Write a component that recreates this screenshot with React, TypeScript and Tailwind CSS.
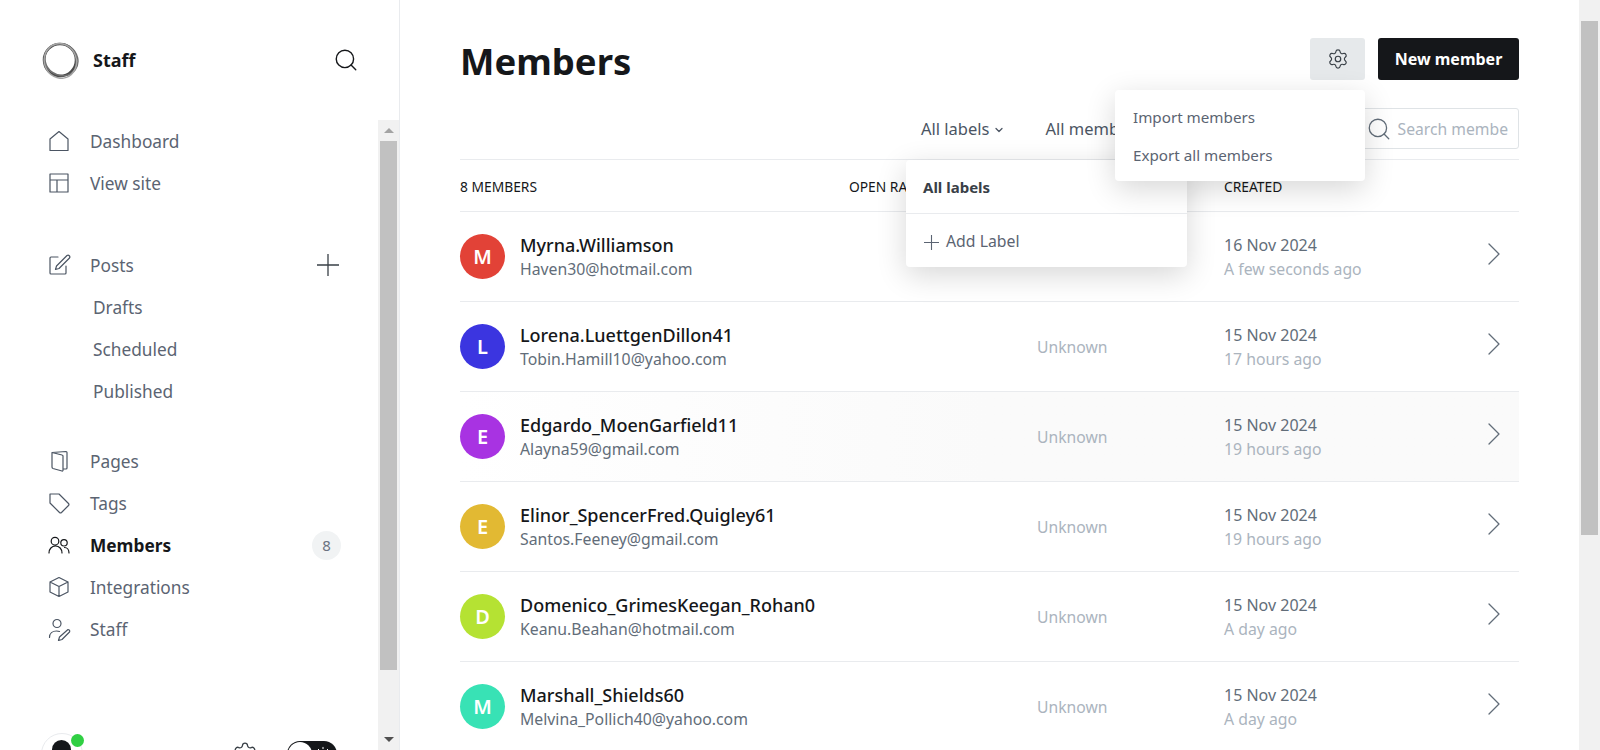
import { ChevronDown, Search, Settings, Sun } from "lucide-react";

const font = "font-['Noto_Sans',sans-serif]";

const members = [
  { initial: "M", color: "bg-[#e24237]", name: "Myrna.Williamson", email: "Haven30@hotmail.com", date: "16 Nov 2024", ago: "A few seconds ago" },
  { initial: "L", color: "bg-[#3b35e0]", name: "Lorena.LuettgenDillon41", email: "Tobin.Hamill10@yahoo.com", date: "15 Nov 2024", ago: "17 hours ago" },
  { initial: "E", color: "bg-[#a833e2]", name: "Edgardo_MoenGarfield11", email: "Alayna59@gmail.com", date: "15 Nov 2024", ago: "19 hours ago", hover: true },
  { initial: "E", color: "bg-[#e2b933]", name: "Elinor_SpencerFred.Quigley61", email: "Santos.Feeney@gmail.com", date: "15 Nov 2024", ago: "19 hours ago" },
  { initial: "D", color: "bg-[#b5e233]", name: "Domenico_GrimesKeegan_Rohan0", email: "Keanu.Beahan@hotmail.com", date: "15 Nov 2024", ago: "A day ago" },
  { initial: "M", color: "bg-[#38e2b5]", name: "Marshall_Shields60", email: "Melvina_Pollich40@yahoo.com", date: "15 Nov 2024", ago: "A day ago" },
];

function NavIcon({ d }: { d: string }) {
  return (
    <svg viewBox="0 0 24 24" className="h-[24px] w-[24px] shrink-0" fill="none" stroke="currentColor" strokeWidth="1.200" strokeLinecap="round" strokeLinejoin="round">
      <path d={d} />
    </svg>
  );
}

const icons = {
  home: "M3 21.500V10L12 2.500 21 10v11.500z",
  layout: "M3 3h18v18H3zM3 9h18M10 9v12",
  pen: "M11 4H4a1 1 0 0 0-1 1v15a1 1 0 0 0 1 1h14a1 1 0 0 0 1-1v-7M20 2.500a1.800 1.800 0 0 1 2.500 2.500L12 15.500l-3.500 1 1-3.500z",
  page: "M5 3.500 19 2.500a1 1 0 0 1 1 1V19a1 1 0 0 1-1 1h-3M5 3.500l10 2.500a1 1 0 0 1 1 1v14.500a.7.7 0 0 1-1 .5l-9-2.500a1.500 1.500 0 0 1-1-1.500z",
  tag: "M3 3h9l9.500 9.500a1.500 1.500 0 0 1 0 2l-7 7a1.500 1.500 0 0 1-2 0L3 12z",
  members: "M8 12a3.800 3.800 0 1 0 0-7.600A3.800 3.800 0 0 0 8 12zM2 20c0-4 2.700-7 6.500-7s6.500 3 6.500 7M17 13a3.200 3.200 0 1 0 0-6.400 3.200 3.200 0 0 0 0 6.400zM17.500 14.500c2.800 0 4.500 2.500 4.500 5.500",
  box: "M12 2.500 21 7v10l-9 4.500L3 17V7zM3 7l9 4.500L21 7M12 11.500v10",
  staff: "M10 10.500a4 4 0 1 0 0-8 4 4 0 0 0 0 8zM2.500 20.500c0-4 3-6.500 7-6.500 1 0 2 .1 3 .5M21 12.500a1.700 1.700 0 0 1 1.500 2.500L15 22.500l-3.500 1 1-3.500z",
};

function NavRow({ icon, label, active, right }: { icon?: string; label: string; active?: boolean; right?: React.ReactNode }) {
  return (
    <div className={`flex h-[42px] shrink-0 items-center ${active ? "text-[#15171a]" : "text-[#4b5563]"}`}>
      {icon ? (
        <span className="mr-[19px] flex w-[24px] justify-center">
          <NavIcon d={icon} />
        </span>
      ) : (
        <span className="w-[46px]" />
      )}
      <span className={`pt-[2px] text-[17.300px] ${active ? "font-bold text-[#15171a]" : "text-[#5b6472]"}`}>{label}</span>
      {right && <span className="ml-auto flex">{right}</span>}
    </div>
  );
}

function ScrollArrow({ up }: { up?: boolean }) {
  return (
    <div className="flex h-[21px] items-center justify-center">
      <div className={`h-0 w-0 border-x-[5px] border-x-transparent ${up ? "border-b-[5px] border-b-[#a3a3a3]" : "border-t-[5px] border-t-[#505050]"}`} />
    </div>
  );
}

function Sidebar() {
  return (
    <aside className="flex h-full w-[400px] shrink-0 overflow-hidden border-r border-[#e9ebee]">
      <div className="flex min-w-0 flex-1 flex-col overflow-hidden pl-[41px] pr-[19px]">
        <div className="flex h-[120px] shrink-0 items-center">
          <svg viewBox="0 0 38 38" className="h-[38px] w-[38px]" fill="none">
            <circle cx="19" cy="19" r="16" stroke="#4a4a4a" strokeWidth="2.500" />
            <ellipse cx="20" cy="18" rx="17" ry="15.500" stroke="#6f6f6f" strokeWidth="1.500" transform="rotate(35 19 19)" />
            <ellipse cx="19" cy="20" rx="16" ry="17.500" stroke="#a5a5a5" strokeWidth="1.500" transform="rotate(-20 19 19)" />
          </svg>
          <span className="ml-[14px] text-[18px] font-bold text-[#15171a]">Staff</span>
          <Search className="ml-auto h-[26px] w-[26px] text-[#15171a]" strokeWidth={1.300} />
        </div>
        <nav className="flex shrink-0 flex-col pl-[6px] pr-[18px]">
          <NavRow icon={icons.home} label="Dashboard" />
          <NavRow icon={icons.layout} label="View site" />
          <div className="h-[40px]" />
          <NavRow
            icon={icons.pen}
            label="Posts"
            right={
              <svg viewBox="0 0 22 22" className="mr-[2px] h-[22px] w-[22px] text-[#394047]" fill="none" stroke="currentColor" strokeWidth="1.300">
                <path d="M11 0v22M0 11h22" />
              </svg>
            }
          />
          <NavRow label="Drafts" />
          <NavRow label="Scheduled" />
          <NavRow label="Published" />
          <div className="h-[28px]" />
          <NavRow icon={icons.page} label="Pages" />
          <NavRow icon={icons.tag} label="Tags" />
          <NavRow
            icon={icons.members}
            label="Members"
            active
            right={<span className="flex h-[29px] w-[29px] items-center justify-center rounded-full bg-[#f1f3f4] text-[15px] text-[#6b7280]">8</span>}
          />
          <NavRow icon={icons.box} label="Integrations" />
          <NavRow icon={icons.staff} label="Staff" />
        </nav>
        <div className="mt-[83px] flex shrink-0 items-start">
          <div className="relative h-[42px] w-[42px] shrink-0 rounded-full border border-[#e9ebee] bg-white">
            <div className="absolute left-[10px] top-[6px] h-[24px] w-[19px] rounded-full bg-[#15171a]" />
            <div className="absolute left-[29px] top-[0px] h-[13px] w-[13px] rounded-full bg-[#30cf43]" />
          </div>
          <Settings className="ml-[149px] mt-[8px] h-[26px] w-[26px] shrink-0 text-[#394047]" strokeWidth={1.200} />
          <div className="ml-[29px] mt-[8px] flex h-[26px] w-[50px] shrink-0 items-center rounded-full bg-[#15171a]">
            <div className="ml-[1px] h-[24px] w-[24px] rounded-full bg-white" />
            <Sun className="ml-[3px] h-[16px] w-[16px] text-white" strokeWidth={1.500} />
          </div>
        </div>
      </div>
      <div className="flex h-full w-[21px] shrink-0 flex-col pt-[120px]">
        <div className="flex flex-1 flex-col bg-[#f1f1f1]">
          <ScrollArrow up />
          <div className="mx-[2px] h-[529px] bg-[#c1c1c1]" />
          <div className="flex-1" />
          <ScrollArrow />
        </div>
      </div>
    </aside>
  );
}

function Row({ m }: { m: (typeof members)[number] }) {
  return (
    <div className={`flex h-[90px] shrink-0 items-center border-b border-[#e9ebee] ${m.hover ? "bg-gradient-to-r from-white via-[#fafafa] to-[#fafafa]" : ""}`}>
      <div className={`flex h-[45px] w-[45px] shrink-0 items-center justify-center rounded-full text-[20px] font-semibold text-white ${m.color}`}>{m.initial}</div>
      <div className="ml-[15px] w-[517px] shrink-0">
        <div className="text-[18px] font-medium leading-[24px] text-[#15171a]">{m.name}</div>
        <div className="text-[15.800px] leading-[24px] text-[#626d79]">{m.email}</div>
      </div>
      <div className="w-[187px] shrink-0 pt-[2px] text-[15.700px] text-[#abb4be]">Unknown</div>
      <div className="w-[263px] shrink-0">
        <div className="text-[16px] leading-[24px] text-[#626d79]">{m.date}</div>
        <div className="text-[15.800px] leading-[24px] text-[#abb4be]">{m.ago}</div>
      </div>
      <svg viewBox="0 0 13 22" className="mb-[5px] h-[22px] w-[13px] shrink-0 text-[#626d79]" fill="none" stroke="currentColor" strokeWidth="1.300" strokeLinecap="round" strokeLinejoin="round">
        <path d="M2 1l10 10L2 21" />
      </svg>
    </div>
  );
}

function Main() {
  return (
    <main className="relative flex h-full min-w-0 flex-1 flex-col overflow-hidden px-[60px]">
      <div className="flex h-[108px] shrink-0 items-start pt-[38px]">
        <h1 className="text-[36.500px] font-bold leading-[46px] text-[#15171a]">Members</h1>
        <div className="ml-auto flex gap-[13px]">
          <button className="flex h-[42px] w-[55px] items-center justify-center rounded-[3px] bg-[#e6e9eb]">
            <Settings className="h-[22px] w-[22px] text-[#394047]" strokeWidth={1.300} />
          </button>
          <button className="h-[42px] w-[141px] rounded-[3px] bg-[#15171a] text-[16px] font-bold text-white">New member</button>
        </div>
      </div>
      <div className="flex h-[52px] shrink-0 items-start border-b border-[#e9ebee]">
        <div className="ml-[461px] flex h-[41px] items-center gap-[4px] pt-[2px] text-[16.500px] text-[#4b5563]">
          All labels <ChevronDown className="h-[12px] w-[12px]" strokeWidth={2.500} />
        </div>
        <div className="ml-[40px] flex h-[41px] items-center pt-[2px] text-[16.500px] text-[#4b5563]">All members</div>
        <div className="ml-auto flex h-[41px] w-[180px] items-center justify-end rounded-[3px] border border-[#dfe3e6] pr-[10px]">
          <Search className="mr-[6px] h-[26px] w-[26px] shrink-0 text-[#626d79]" strokeWidth={1.200} />
          <span className="whitespace-nowrap pt-[2px] text-[15.700px] text-[#abb4be]">Search membe</span>
        </div>
      </div>
      <div className="flex h-[52px] shrink-0 items-center border-b border-[#e9ebee] pt-[3px] text-[13.800px] text-[#15171a]">
        <span className="w-[389px]">8 MEMBERS</span>
        <span className="w-[375px]">OPEN RATE</span>
        <span>CREATED</span>
      </div>
      {members.map((m) => (
        <Row key={m.email} m={m} />
      ))}

      <div className="absolute left-[506px] top-[160px] w-[281px] rounded-[4px] bg-white shadow-[0_8px_30px_rgba(0,0,0,0.16)]">
        <div className="flex h-[54px] items-center border-b border-[#e9ebee] pl-[17px] pt-[1px] text-[15px] font-bold text-[#394047]">All labels</div>
        <div className="flex h-[53px] items-center pl-[18px] pt-[3px] text-[15.800px] text-[#5b6472]">
          <svg viewBox="0 0 15 15" className="mr-[7px] h-[15px] w-[15px]" fill="none" stroke="currentColor" strokeWidth="1.100">
            <path d="M7.500 0v15M0 7.500h15" />
          </svg>
          Add Label
        </div>
      </div>
      <div className="absolute left-[715px] top-[90px] h-[91px] w-[250px] rounded-[4px] bg-white py-[9px] pl-[18px] text-[15.200px] text-[#5b6472] shadow-[0_8px_30px_rgba(0,0,0,0.16)]">
        <div className="flex h-[37px] items-center">Import members</div>
        <div className="flex h-[38px] items-center">Export all members</div>
      </div>
    </main>
  );
}

export default function App() {
  return (
    <div className={`flex h-screen w-full overflow-hidden bg-white ${font}`}>
      <Sidebar />
      <Main />
      <div className="flex h-full w-[21px] shrink-0 flex-col bg-[#f1f1f1]">
        <div className="mx-[2px] mt-[21px] h-[514px] bg-[#c1c1c1]" />
      </div>
    </div>
  );
}
